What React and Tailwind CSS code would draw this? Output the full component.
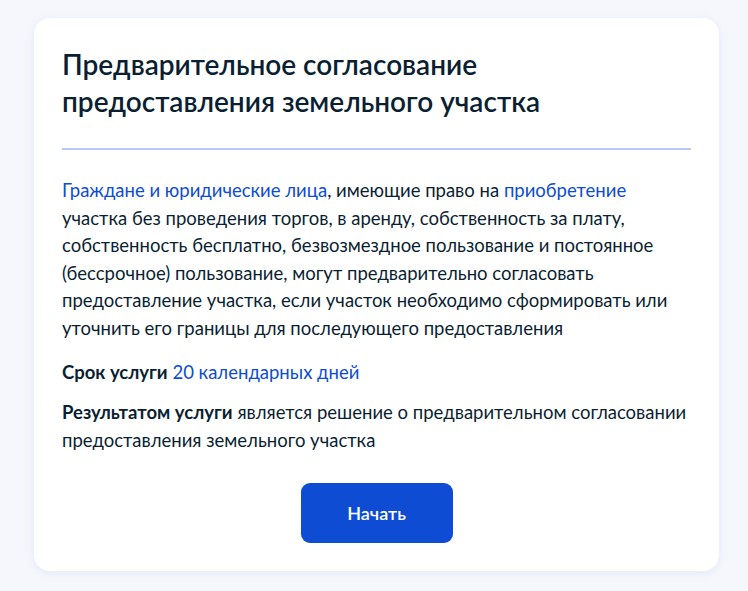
export default function App() {
  return (
    <div className="min-h-[591px] w-full bg-[#f5f7fc] px-[34px] pt-[18px] pb-[20px]" style={{ fontFamily: "Lato, 'Noto Sans', sans-serif" }}>
      <div className="w-[685px] rounded-[16px] bg-white px-[28px] pt-[28px] pb-[28px] shadow-[0_2px_8px_rgba(176,196,230,0.25)] text-[#0b1f33]">
        <h1 className="text-[28px] leading-[36.5px] font-semibold">
          Предварительное согласование<br />предоставления земельного участка
        </h1>
        <div className="mt-[29px] h-[2px] bg-[#b8caf2]" />
        <p className="mt-[27px] text-[18.5px] leading-[27.6px]">
          <span className="text-[#0d4cd3]">Граждане и юридические лица</span>, имеющие право на <span className="text-[#0d4cd3]">приобретение</span> участка без проведения торгов, в аренду, собственность за плату, собственность бесплатно, безвозмездное пользование и постоянное (бессрочное) пользование, могут предварительно согласовать предоставление участка, если участок необходимо сформировать или уточнить его границы для последующего предоставления
        </p>
        <p className="mt-[16px] text-[18.5px] leading-[27.6px]">
          <span className="font-bold">Срок услуги</span> <span className="text-[#0d4cd3]">20 календарных дней</span>
        </p>
        <p className="mt-[13px] text-[18.5px] leading-[27.6px]">
          <span className="font-bold">Результатом услуги</span> является решение о предварительном согласовании предоставления земельного участка
        </p>
        <div className="mt-[29px] flex justify-center">
          <button className="h-[60px] w-[152px] rounded-[9px] bg-[#0d4cd3] text-[18px] font-semibold text-white">
            Начать
          </button>
        </div>
      </div>
    </div>
  );
}
